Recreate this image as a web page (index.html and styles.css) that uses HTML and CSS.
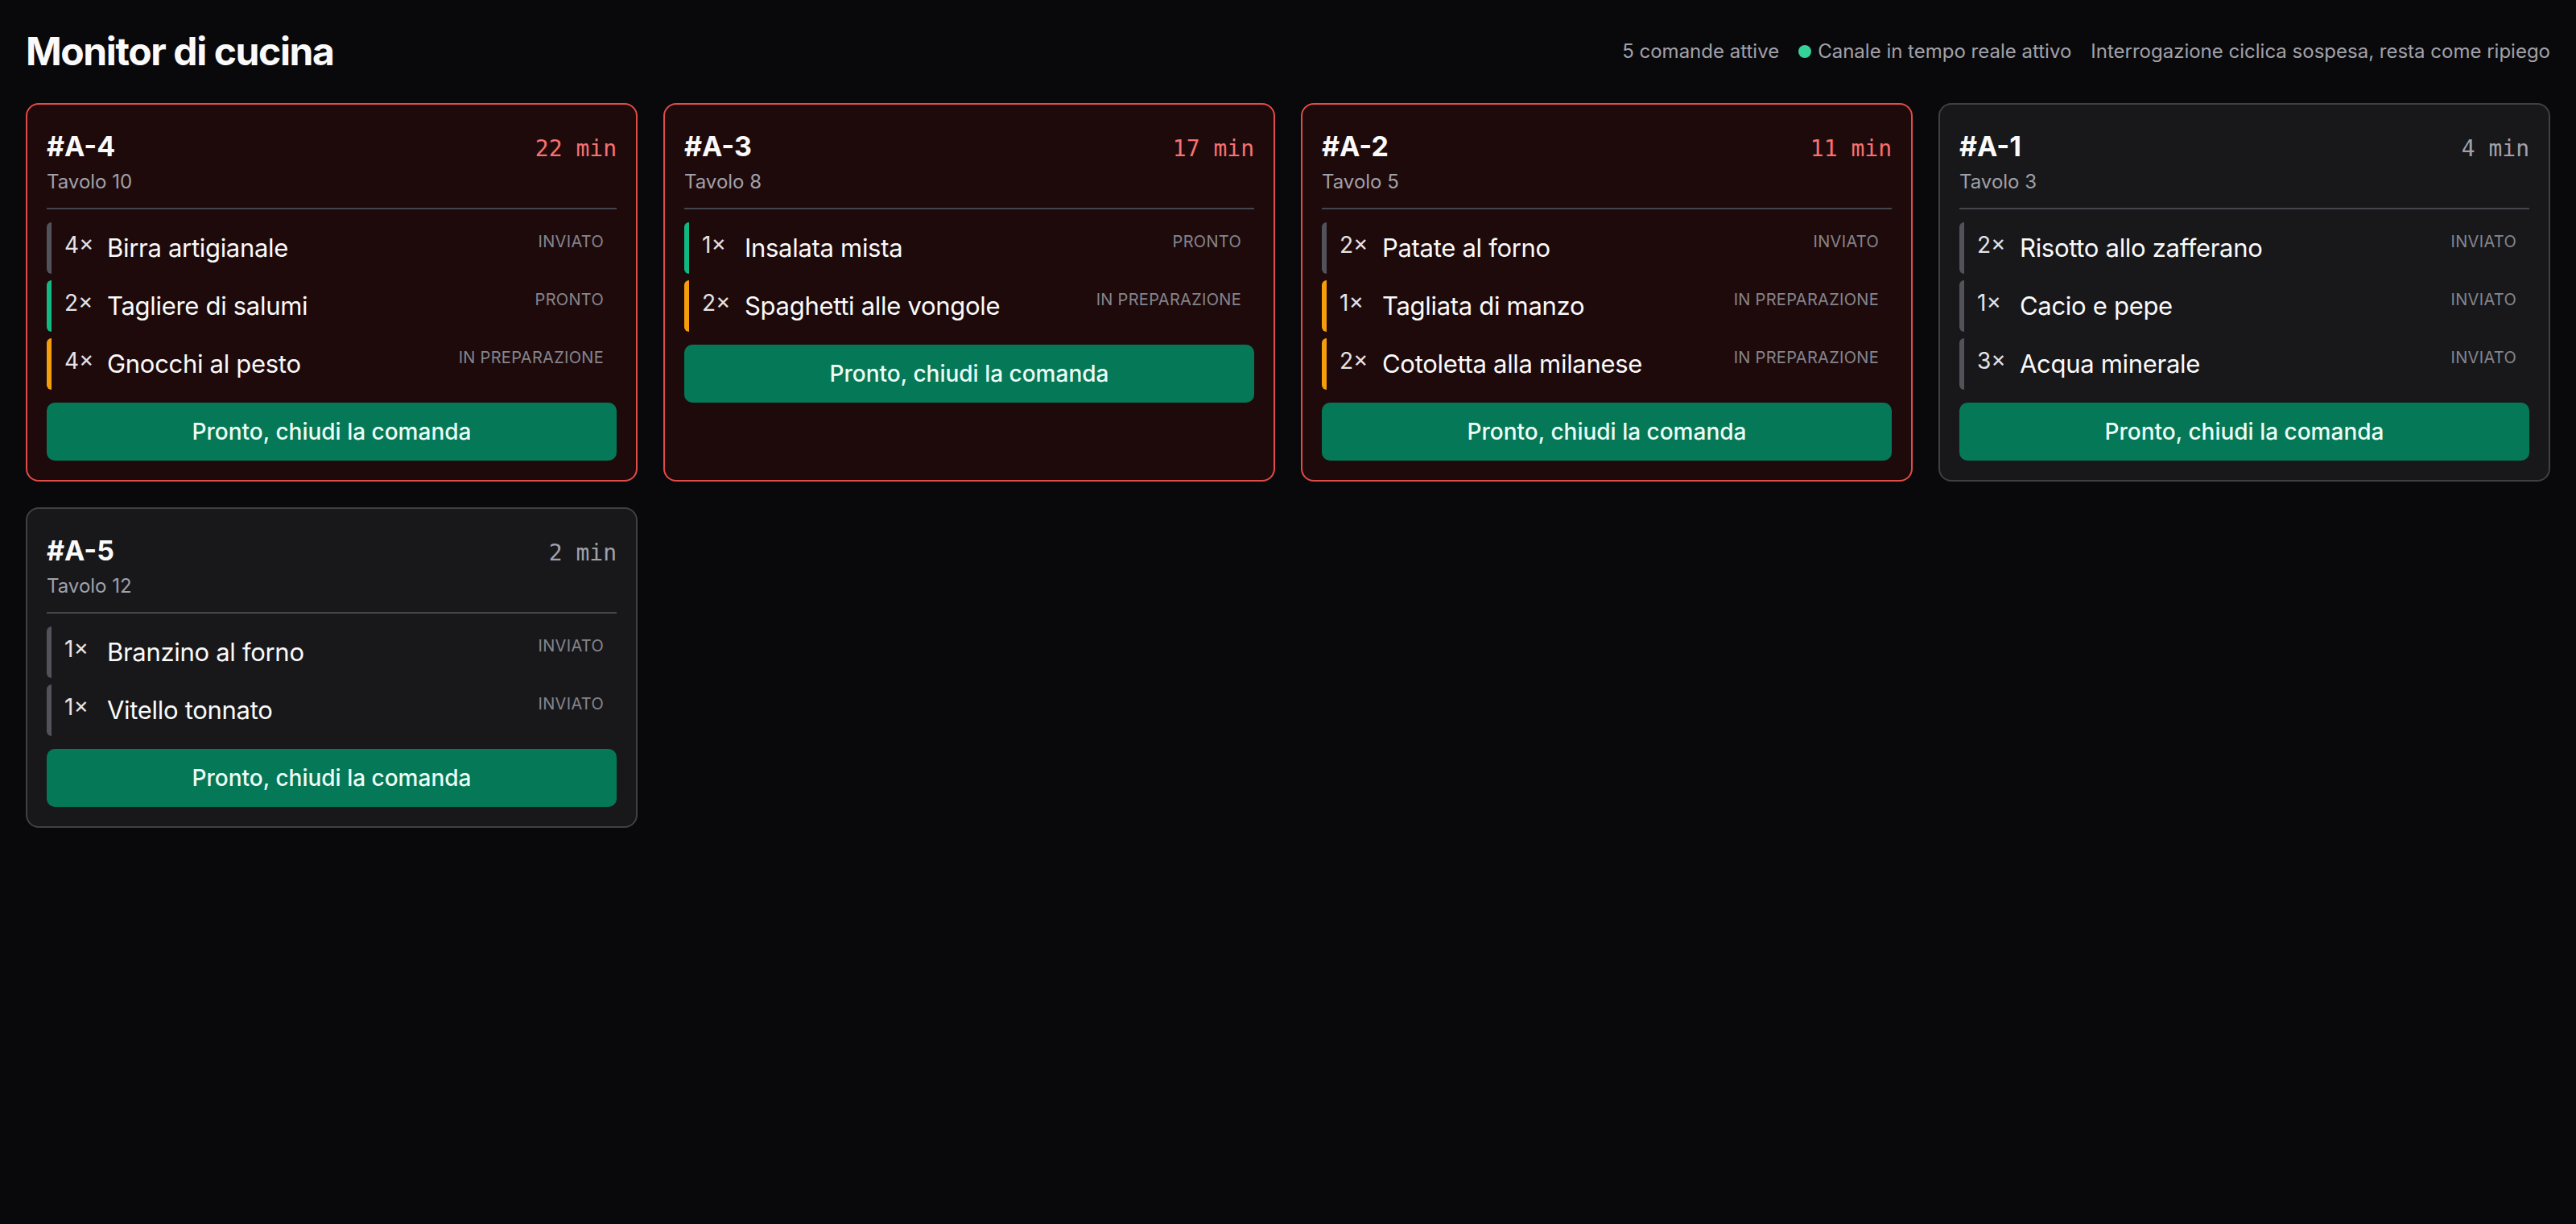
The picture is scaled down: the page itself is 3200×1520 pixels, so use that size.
FILE: index.html
```html
<!DOCTYPE html>
<html lang="it">
<head>
<meta charset="utf-8">
<title>Monitor di cucina</title>
<link rel="stylesheet" href="styles.css">
</head>
<body>
<header class="top">
  <h1 class="title">Monitor di cucina</h1>
  <div class="meta">
    <span>5 comande attive</span>
    <span class="live"><span class="dot"></span>Canale in tempo reale attivo</span>
    <span>Interrogazione ciclica sospesa, resta come ripiego</span>
  </div>
</header>
<main class="grid">
  <section class="card late">
    <div class="head">
      <div class="id-row"><span class="id">#A-4</span><span class="time">22 min</span></div>
      <div class="table">Tavolo 10</div>
    </div>
    <ul class="items">
      <li class="item sent"><span class="qty">4×</span><span class="name">Birra artigianale</span><span class="status">Inviato</span></li>
      <li class="item ready"><span class="qty">2×</span><span class="name">Tagliere di salumi</span><span class="status">Pronto</span></li>
      <li class="item prep"><span class="qty">4×</span><span class="name">Gnocchi al pesto</span><span class="status">In preparazione</span></li>
    </ul>
    <button class="close">Pronto, chiudi la comanda</button>
  </section>
  <section class="card late">
    <div class="head">
      <div class="id-row"><span class="id">#A-3</span><span class="time">17 min</span></div>
      <div class="table">Tavolo 8</div>
    </div>
    <ul class="items">
      <li class="item ready"><span class="qty">1×</span><span class="name">Insalata mista</span><span class="status">Pronto</span></li>
      <li class="item prep"><span class="qty">2×</span><span class="name">Spaghetti alle vongole</span><span class="status">In preparazione</span></li>
    </ul>
    <button class="close">Pronto, chiudi la comanda</button>
  </section>
  <section class="card late">
    <div class="head">
      <div class="id-row"><span class="id">#A-2</span><span class="time">11 min</span></div>
      <div class="table">Tavolo 5</div>
    </div>
    <ul class="items">
      <li class="item sent"><span class="qty">2×</span><span class="name">Patate al forno</span><span class="status">Inviato</span></li>
      <li class="item prep"><span class="qty">1×</span><span class="name">Tagliata di manzo</span><span class="status">In preparazione</span></li>
      <li class="item prep"><span class="qty">2×</span><span class="name">Cotoletta alla milanese</span><span class="status">In preparazione</span></li>
    </ul>
    <button class="close">Pronto, chiudi la comanda</button>
  </section>
  <section class="card">
    <div class="head">
      <div class="id-row"><span class="id">#A-1</span><span class="time">4 min</span></div>
      <div class="table">Tavolo 3</div>
    </div>
    <ul class="items">
      <li class="item sent"><span class="qty">2×</span><span class="name">Risotto allo zafferano</span><span class="status">Inviato</span></li>
      <li class="item sent"><span class="qty">1×</span><span class="name">Cacio e pepe</span><span class="status">Inviato</span></li>
      <li class="item sent"><span class="qty">3×</span><span class="name">Acqua minerale</span><span class="status">Inviato</span></li>
    </ul>
    <button class="close">Pronto, chiudi la comanda</button>
  </section>
  <section class="card">
    <div class="head">
      <div class="id-row"><span class="id">#A-5</span><span class="time">2 min</span></div>
      <div class="table">Tavolo 12</div>
    </div>
    <ul class="items">
      <li class="item sent"><span class="qty">1×</span><span class="name">Branzino al forno</span><span class="status">Inviato</span></li>
      <li class="item sent"><span class="qty">1×</span><span class="name">Vitello tonnato</span><span class="status">Inviato</span></li>
    </ul>
    <button class="close">Pronto, chiudi la comanda</button>
  </section>
</main>
</body>
</html>
```
FILE: styles.css
```css
* { box-sizing: border-box; }
html, body { margin: 0; padding: 0; }
body {
  background: #09090b;
  color: #fafafa;
  font-family: Inter, "Noto Sans", sans-serif;
  padding: 32px;
  min-height: 1520px;
}
.top {
  display: flex;
  justify-content: space-between;
  align-items: center;
  margin-bottom: 32px;
}
.title {
  margin: 0;
  font-size: 48px;
  line-height: 64px;
  font-weight: 700;
  letter-spacing: -1.4px;
  color: #fafafa;
}
.meta {
  display: flex;
  align-items: center;
  gap: 24px;
  font-size: 24px;
  line-height: 32px;
  color: #a1a1aa;
}
.live { display: flex; align-items: center; gap: 8px; }
.dot {
  width: 16px;
  height: 16px;
  border-radius: 50%;
  background: #34d399;
}
.grid {
  display: grid;
  grid-template-columns: repeat(4, 1fr);
  gap: 32px;
}
.card {
  background: #18181b;
  border: 2px solid #3f3f46;
  border-radius: 16px;
  padding: 24px;
  display: flex;
  flex-direction: column;
}
.card.late {
  background: #1f0a0b;
  border-color: #e24c48;
}
.head {
  padding-bottom: 16px;
  border-bottom: 2px solid #45454d;
}
.id-row {
  display: flex;
  justify-content: space-between;
  align-items: baseline;
}
.id {
  font-size: 34px;
  line-height: 56px;
  font-weight: 700;
  color: #fafafa;
}
.time {
  font-family: "DejaVu Sans Mono", "Liberation Mono", monospace;
  font-size: 28px;
  color: #a1a1aa;
}
.late .time { color: #f87171; }
.table {
  font-size: 24px;
  line-height: 32px;
  color: #a1a1aa;
}
.items {
  list-style: none;
  margin: 16px 0 0;
  padding: 0;
  display: flex;
  flex-direction: column;
  gap: 8px;
}
.item {
  display: flex;
  align-items: flex-start;
  border-left: 6px solid #52525b;
  border-radius: 6px;
  padding: 8px 16px 8px 16px;
}
.item.ready { border-left-color: #10b981; }
.item.prep { border-left-color: #f59e0b; }
.qty {
  flex: none;
  width: 53px;
  font-size: 28px;
  line-height: 40px;
  color: #e4e4e7;
}
.name {
  flex: 1;
  font-size: 31px;
  line-height: 48px;
  letter-spacing: -0.3px;
  color: #fafafa;
}
.status {
  font-size: 20px;
  line-height: 32px;
  text-transform: uppercase;
  letter-spacing: 0.3px;
  color: #85858d;
}
.close {
  margin-top: 16px;
  width: 100%;
  height: 72px;
  border: none;
  border-radius: 10px;
  background: #047857;
  color: #ecfdf5;
  font-family: Inter, "Noto Sans", sans-serif;
  font-size: 28px;
  font-weight: 500;
}
```
